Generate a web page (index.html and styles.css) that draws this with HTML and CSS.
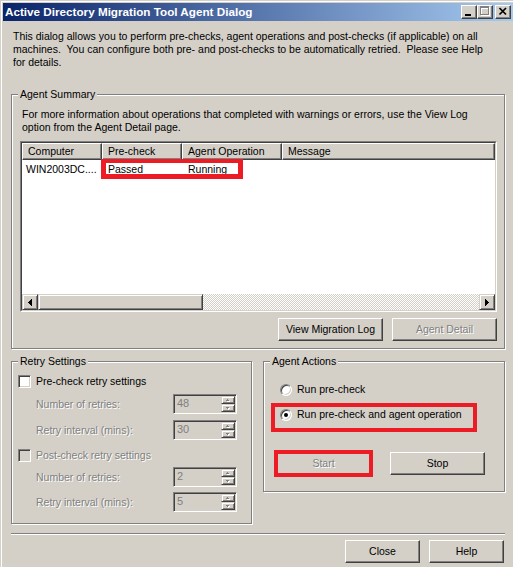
FILE: index.html
```html
<!DOCTYPE html>
<html>
<head>
<meta charset="utf-8">
<title>Active Directory Migration Tool Agent Dialog</title>
<link rel="stylesheet" href="styles.css">
</head>
<body>
<div class="window">
  <div class="titlebar">
    <span class="title">Active Directory Migration Tool Agent Dialog</span>
    <div class="caption-btns">
      <span class="cbtn"><svg width="14" height="12" viewBox="0 0 14 12" shape-rendering="crispEdges"><rect x="3" y="8" width="6" height="2" fill="#000"/></svg></span>
      <span class="cbtn"><svg width="14" height="12" viewBox="0 0 14 12" shape-rendering="crispEdges">
        <g fill="#fff"><rect x="3" y="1" width="9" height="2"/><rect x="3" y="1" width="1" height="9"/><rect x="11" y="1" width="1" height="9"/><rect x="3" y="9" width="9" height="1"/></g>
        <g fill="#808080"><rect x="2" y="0" width="9" height="2"/><rect x="2" y="0" width="1" height="9"/><rect x="10" y="0" width="1" height="9"/><rect x="2" y="8" width="9" height="1"/></g>
      </svg></span>
      <span class="cbtn close"><svg width="14" height="12" viewBox="0 0 14 12"><path d="M3.5 2 L10 8.5 M10 2 L3.5 8.5" stroke="#000" stroke-width="1.7" fill="none"/></svg></span>
    </div>
  </div>

  <div class="content">
    <p class="intro">This dialog allows you to perform pre-checks, agent operations and post-checks (if applicable) on all<br>machines.&nbsp; You can configure both pre- and post-checks to be automatically retried.&nbsp; Please see Help<br>for details.</p>

    <fieldset class="group summary">
      <legend>Agent Summary</legend>
      <p class="summary-text">For more information about operations that completed with warnings or errors, use the View Log<br>option from the Agent Detail page.</p>
      <div class="listview">
        <div class="lv-inner">
          <div class="lv-header">
            <span class="hd">Computer</span>
            <span class="hd">Pre-check</span>
            <span class="hd">Agent Operation</span>
            <span class="hd">Message</span>
          </div>
          <div class="lv-body">
            <div class="lv-row">
              <span class="cell first">WIN2003DC....</span>
              <span class="cell">Passed</span>
              <span class="cell">Running</span>
              <span class="cell"></span>
            </div>
            <div class="mark row-mark"></div>
          </div>
          <div class="hscroll">
            <span class="sb-btn"><svg width="14" height="14" viewBox="0 0 14 14" shape-rendering="crispEdges" fill="#000"><rect x="5" y="7" width="1" height="1"/><rect x="6" y="6" width="1" height="3"/><rect x="7" y="5" width="1" height="5"/><rect x="8" y="4" width="1" height="7"/></svg></span>
            <span class="sb-thumb"></span>
            <span class="sb-track"></span>
            <span class="sb-btn"><svg width="14" height="14" viewBox="0 0 14 14" shape-rendering="crispEdges" fill="#000"><rect x="5" y="4" width="1" height="7"/><rect x="6" y="5" width="1" height="5"/><rect x="7" y="6" width="1" height="3"/><rect x="8" y="7" width="1" height="1"/></svg></span>
          </div>
        </div>
      </div>
      <div class="btn-row">
        <button class="btn wide">View Migration Log</button>
        <button class="btn wide" disabled>Agent Detail</button>
      </div>
    </fieldset>

    <div class="lower">
      <fieldset class="group retry">
        <legend>Retry Settings</legend>
        <div class="check-row">
          <span class="checkbox"></span>
          <span>Pre-check retry settings</span>
        </div>
        <div class="field-row gap6">
          <span class="lbl disabled-text">Number of retries:</span>
          <span class="spin"><span class="spin-val">48</span><span class="spin-btns"><span class="spin-btn"><svg width="12" height="6" viewBox="0 0 12 6" shape-rendering="crispEdges"><rect x="6" y="3" width="1" height="1" fill="#fff"/><rect x="5" y="4" width="3" height="1" fill="#fff"/><rect x="5" y="2" width="1" height="1" fill="#808080"/><rect x="4" y="3" width="3" height="1" fill="#808080"/></svg></span><span class="spin-btn"><svg width="12" height="6" viewBox="0 0 12 6" shape-rendering="crispEdges"><rect x="5" y="3" width="3" height="1" fill="#fff"/><rect x="6" y="4" width="1" height="1" fill="#fff"/><rect x="4" y="2" width="3" height="1" fill="#808080"/><rect x="5" y="3" width="1" height="1" fill="#808080"/></svg></span></span></span>
        </div>
        <div class="field-row gap6">
          <span class="lbl disabled-text">Retry interval (mins):</span>
          <span class="spin"><span class="spin-val">30</span><span class="spin-btns"><span class="spin-btn"><svg width="12" height="6" viewBox="0 0 12 6" shape-rendering="crispEdges"><rect x="6" y="3" width="1" height="1" fill="#fff"/><rect x="5" y="4" width="3" height="1" fill="#fff"/><rect x="5" y="2" width="1" height="1" fill="#808080"/><rect x="4" y="3" width="3" height="1" fill="#808080"/></svg></span><span class="spin-btn"><svg width="12" height="6" viewBox="0 0 12 6" shape-rendering="crispEdges"><rect x="5" y="3" width="3" height="1" fill="#fff"/><rect x="6" y="4" width="1" height="1" fill="#fff"/><rect x="4" y="2" width="3" height="1" fill="#808080"/><rect x="5" y="3" width="1" height="1" fill="#808080"/></svg></span></span></span>
        </div>
        <div class="check-row post">
          <span class="checkbox disabled"></span>
          <span class="disabled-text">Post-check retry settings</span>
        </div>
        <div class="field-row gap5">
          <span class="lbl disabled-text">Number of retries:</span>
          <span class="spin"><span class="spin-val">2</span><span class="spin-btns"><span class="spin-btn"><svg width="12" height="6" viewBox="0 0 12 6" shape-rendering="crispEdges"><rect x="6" y="3" width="1" height="1" fill="#fff"/><rect x="5" y="4" width="3" height="1" fill="#fff"/><rect x="5" y="2" width="1" height="1" fill="#808080"/><rect x="4" y="3" width="3" height="1" fill="#808080"/></svg></span><span class="spin-btn"><svg width="12" height="6" viewBox="0 0 12 6" shape-rendering="crispEdges"><rect x="5" y="3" width="3" height="1" fill="#fff"/><rect x="6" y="4" width="1" height="1" fill="#fff"/><rect x="4" y="2" width="3" height="1" fill="#808080"/><rect x="5" y="3" width="1" height="1" fill="#808080"/></svg></span></span></span>
        </div>
        <div class="field-row gap5">
          <span class="lbl disabled-text">Retry interval (mins):</span>
          <span class="spin"><span class="spin-val">5</span><span class="spin-btns"><span class="spin-btn"><svg width="12" height="6" viewBox="0 0 12 6" shape-rendering="crispEdges"><rect x="6" y="3" width="1" height="1" fill="#fff"/><rect x="5" y="4" width="3" height="1" fill="#fff"/><rect x="5" y="2" width="1" height="1" fill="#808080"/><rect x="4" y="3" width="3" height="1" fill="#808080"/></svg></span><span class="spin-btn"><svg width="12" height="6" viewBox="0 0 12 6" shape-rendering="crispEdges"><rect x="5" y="3" width="3" height="1" fill="#fff"/><rect x="6" y="4" width="1" height="1" fill="#fff"/><rect x="4" y="2" width="3" height="1" fill="#808080"/><rect x="5" y="3" width="1" height="1" fill="#808080"/></svg></span></span></span>
        </div>
      </fieldset>

      <fieldset class="group actions">
        <legend>Agent Actions</legend>
        <div class="radio-row">
          <span class="radio"></span>
          <span>Run pre-check</span>
        </div>
        <div class="radio-row marked">
          <span class="radio checked"></span>
          <span>Run pre-check and agent operation</span>
        </div>
        <div class="action-btns">
          <button class="btn mid start" disabled>Start</button>
          <button class="btn mid">Stop</button>
        </div>
      </fieldset>
    </div>

    <div class="separator"></div>

    <div class="footer">
      <button class="btn small">Close</button>
      <button class="btn small">Help</button>
    </div>
  </div>
</div>
</body>
</html>
```

FILE: styles.css
```css
* { box-sizing: border-box; }

html, body { margin: 0; padding: 0; }

body {
  width: 513px;
  height: 567px;
  overflow: hidden;
  background: #d4d0c8;
  font-family: "Liberation Sans", Arial, sans-serif;
  font-size: 10.5px;
  line-height: 13px;
  color: #000;
}

.window {
  height: 567px;
  padding-top: 3px;
  background: #d4d0c8;
  box-shadow: inset 1px 1px 0 #d4d0c8, inset 2px 2px 0 #fff;
}

/* Title bar */
.titlebar {
  margin-left: 3px;
  height: 18px;
  display: flex;
  align-items: center;
  padding: 0 2px;
  background: linear-gradient(to right, #0a246a, #a6caf0);
  color: #fff;
}

.title {
  font-weight: bold;
  font-size: 11.7px;
  line-height: 14px;
  white-space: nowrap;
}

.caption-btns {
  margin-left: auto;
  display: flex;
}

.cbtn {
  width: 16px;
  height: 14px;
  background: #d4d0c8;
  border: 1px solid;
  border-color: #fff #404040 #404040 #fff;
  box-shadow: inset -1px -1px 0 #808080;
}

.cbtn svg { display: block; }
.cbtn.close { margin-left: 2px; }

/* Content */
.content {
  padding: 9px 8px 0 11px;
}

.intro {
  margin: 0 0 0 2px;
  white-space: nowrap;
}

.group {
  margin: 0;
  min-width: 0;
  border: 1px solid #808080;
  box-shadow: inset 1px 1px 0 #fff, 1px 1px 0 #fff;
  padding: 0 7px 7px 6px;
}

.group > legend {
  padding: 0 2px;
  line-height: 13px;
  background: #d4d0c8;
}

.summary {
  margin-top: 19px;
  padding-top: 7px;
}

.summary-text {
  margin: 0 0 0 4px;
  white-space: nowrap;
}

/* List view */
.listview {
  margin: 7px 0 0 2px;
  height: 171px;
  border: 1px solid;
  border-color: #808080 #fff #fff #808080;
}

.lv-inner {
  height: 100%;
  border: 1px solid;
  border-color: #404040 #d4d0c8 #d4d0c8 #404040;
  background: #fff;
  display: flex;
  flex-direction: column;
}

.lv-header, .lv-row {
  display: grid;
  grid-template-columns: 80px 80px 100px 1fr;
}

.lv-header { height: 17px; }

.hd {
  background: #d4d0c8;
  border: 1px solid;
  border-color: #fff #404040 #404040 #fff;
  box-shadow: inset -1px -1px 0 #808080;
  padding: 1px 0 0 5px;
  white-space: nowrap;
  overflow: hidden;
}

.lv-body {
  flex: 1;
  position: relative;
}

.lv-row { height: 18px; align-items: center; }

.cell {
  padding-left: 6px;
  white-space: nowrap;
  padding-top: 1px;
}

.cell.first { padding-left: 4px; }

.mark {
  border: 4px solid #ed1c24;
}

.row-mark {
  position: absolute;
  left: 79px;
  top: -1px;
  width: 142px;
  height: 20px;
  border-width: 4px 5px 5px 5px;
}

/* Horizontal scrollbar */
.hscroll {
  height: 16px;
  display: flex;
}

.sb-btn, .sb-thumb {
  height: 16px;
  background: #d4d0c8;
  border: 1px solid;
  border-color: #d4d0c8 #404040 #404040 #d4d0c8;
  box-shadow: inset 1px 1px 0 #fff, inset -1px -1px 0 #808080;
}

.sb-btn { width: 16px; }
.sb-btn svg { display: block; }
.sb-thumb { width: 165px; }

.sb-track {
  flex: 1;
  background-color: #fff;
  background-image: repeating-conic-gradient(#fff 0 25%, #d4d0c8 0 50%);
  background-size: 2px 2px;
}

/* Buttons */
.btn {
  font: inherit;
  height: 23px;
  padding: 0;
  background: #d4d0c8;
  color: #000;
  border: 1px solid;
  border-color: #fff #404040 #404040 #fff;
  box-shadow: inset -1px -1px 0 #808080, inset 1px 1px 0 #d4d0c8;
}

.btn:disabled {
  color: #808080;
  text-shadow: 1px 1px 0 #fff;
}

.btn.wide { width: 105px; }
.btn.mid { width: 95px; }
.btn.small { width: 75px; }

.btn-row {
  display: flex;
  justify-content: flex-end;
  gap: 9px;
  margin-top: 6px;
}

/* Lower section */
.lower {
  display: flex;
  align-items: flex-start;
  gap: 11px;
  margin-top: 6px;
}

.retry {
  width: 241px;
  padding: 7px 6px 11px 6px;
}

.actions {
  width: 242px;
  padding: 15px 6px 16px 6px;
}

.disabled-text {
  color: #808080;
  text-shadow: 1px 1px 0 #fff;
}

.check-row {
  display: flex;
  align-items: center;
  gap: 5px;
  height: 13px;
  white-space: nowrap;
}

.check-row.post { margin-top: 9px; }

.checkbox {
  width: 13px;
  height: 13px;
  flex: none;
  background: #fff;
  border: 1px solid;
  border-color: #808080 #fff #fff #808080;
  box-shadow: inset 1px 1px 0 #404040, inset -1px -1px 0 #d4d0c8;
}

.checkbox.disabled { background: #d4d0c8; }

.field-row {
  display: flex;
  align-items: center;
  height: 20px;
  padding-left: 18px;
  white-space: nowrap;
}

.field-row.gap6 { margin-top: 6px; }
.field-row.gap5 { margin-top: 5px; }

.field-row .lbl { width: 137px; }

.spin {
  width: 64px;
  height: 20px;
  display: flex;
  padding: 1px;
  background: #d4d0c8;
  border: 1px solid;
  border-color: #808080 #fff #fff #808080;
  box-shadow: inset 1px 1px 0 #404040, inset -1px -1px 0 #d4d0c8;
}

.spin-val {
  flex: 1;
  padding: 1px 0 0 2px;
  color: #808080;
  font-size: 11px;
}

.spin-btns {
  width: 14px;
  display: flex;
  flex-direction: column;
}

.spin-btn {
  flex: 1;
  background: #d4d0c8;
  border: 1px solid;
  border-color: #d4d0c8 #404040 #404040 #d4d0c8;
  box-shadow: inset 1px 1px 0 #fff, inset -1px -1px 0 #808080;
}

.spin-btn svg { display: block; }

/* Radios */
.radio-row {
  display: flex;
  align-items: center;
  gap: 5px;
  margin-left: 5px;
  padding-left: 5px;
  width: 198px;
  height: 13px;
  white-space: nowrap;
}

.radio-row.marked {
  margin-top: 11px;
  height: 21px;
  padding-bottom: 7px;
  padding-top: 1px;
  outline: 4px solid #ed1c24;
}

.radio {
  width: 12px;
  height: 12px;
  flex: none;
  border-radius: 50%;
  background: #fff;
  border: 1px solid;
  border-color: #808080 #fff #fff #808080;
  box-shadow: inset 1px 1px 0 #404040, inset -1px -1px 0 #d4d0c8;
  display: flex;
  align-items: center;
  justify-content: center;
}

.radio.checked::after {
  content: "";
  width: 4px;
  height: 4px;
  border-radius: 50%;
  background: #000;
}

.action-btns {
  display: flex;
  gap: 19px;
  margin: 24px 0 0 6px;
}

.btn.start {
  outline: 4px solid #ed1c24;
  outline-offset: -2px;
}

/* Footer */
.separator {
  margin-top: 9px;
  height: 2px;
  border-top: 1px solid #808080;
  border-bottom: 1px solid #fff;
}

.footer {
  display: flex;
  justify-content: flex-end;
  gap: 9px;
  margin-top: 5px;
  padding-right: 1px;
}
```
